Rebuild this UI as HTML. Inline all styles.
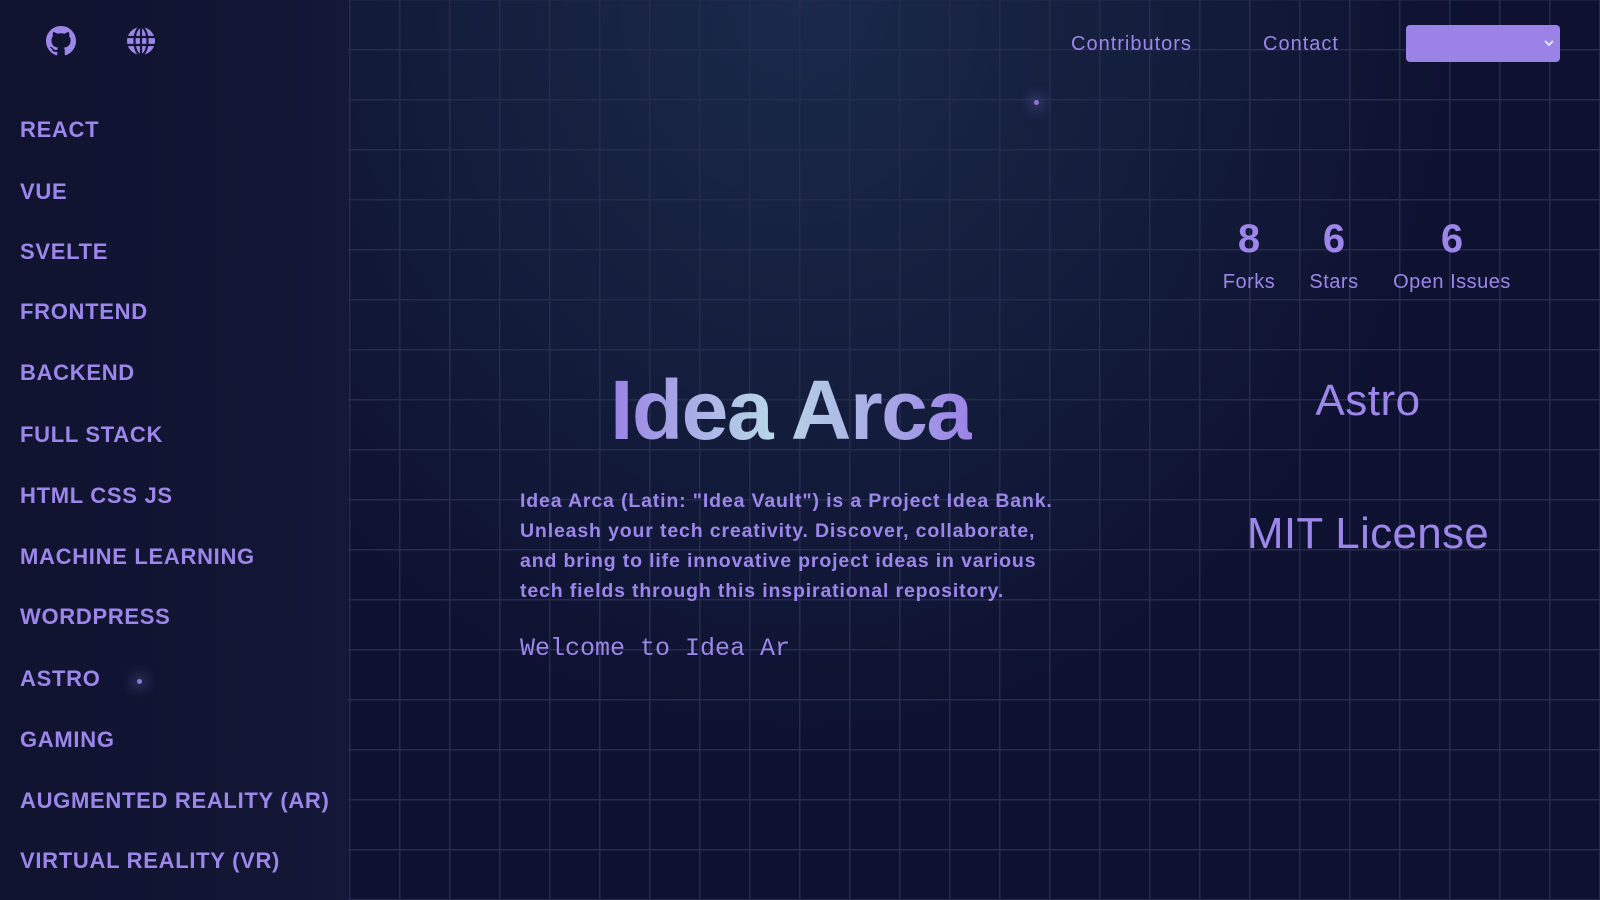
<!DOCTYPE html>
<html><head><meta charset="utf-8"><style>
*{margin:0;padding:0;box-sizing:border-box}
html,body{width:1600px;height:900px;overflow:hidden}
body{background:#0e1130;font-family:"Liberation Sans",sans-serif;color:#9d86ea;position:relative;
background-image:linear-gradient(#252a4e 1.5px,transparent 1.5px),linear-gradient(90deg,#252a4e 1.5px,transparent 1.5px),radial-gradient(ellipse at 50% 0%,#1a2a4a 0%,#0e1130 60%);
background-size:50px 50px,50px 50px,100% 100%;background-position:-1px -1px,-1px -1px,0 0}
.side{position:absolute;left:0;top:0;width:348px;height:900px;background:linear-gradient(90deg,#0f1330,#121634 80%,#14183a);}
.side .ic{position:absolute;top:26px}
.nav{position:absolute;left:20px;font-size:22px;line-height:26px;font-weight:bold;letter-spacing:0.7px;color:#9d86ea}
.top{position:absolute;top:33px;font-size:20px;letter-spacing:1px;color:#9d86ea}
.sel{position:absolute;left:1406px;top:25px;width:154px;height:37px;background:#9a82e6;border-radius:4px}
.stat{position:absolute;text-align:center;color:#9d86ea}
.stat b{display:block;font-size:40px;line-height:46px;margin-bottom:9px}
.stat span{font-size:20px;letter-spacing:0.5px}
h1{position:absolute;left:610px;top:362px;font-size:84px;font-weight:900;letter-spacing:-1.5px;
background:linear-gradient(90deg,#9a82e6 0%,#b8d8e6 45%,#9a82e6 100%);-webkit-background-clip:text;background-clip:text;color:transparent}
.desc{position:absolute;left:520px;top:486px;width:545px;font-size:19.5px;line-height:30px;font-weight:bold;letter-spacing:0.85px;color:#9d86ea}
.mono{position:absolute;left:520px;top:634px;font-family:"Liberation Mono",monospace;font-size:25px;color:#9d86ea}
.big{position:absolute;width:400px;left:1168px;text-align:center;color:#9d86ea}
.dot{position:absolute;border-radius:50%;background:#8a78d8;box-shadow:0 0 12px 6px rgba(140,120,220,.25)}
</style></head><body>
<div class="side">
<svg class="ic" style="left:46px" width="30" height="30" viewBox="0 0 16 16" fill="#9d86ea"><path d="M8 0C3.58 0 0 3.58 0 8c0 3.54 2.29 6.53 5.47 7.59.4.07.55-.17.55-.38 0-.19-.01-.82-.01-1.49-2.01.37-2.53-.49-2.69-.94-.09-.23-.48-.94-.82-1.13-.28-.15-.68-.52-.01-.53.63-.01 1.08.58 1.23.82.72 1.21 1.87.87 2.33.66.07-.52.28-.87.51-1.07-1.78-.2-3.64-.89-3.64-3.95 0-.87.31-1.59.82-2.15-.08-.2-.36-1.02.08-2.12 0 0 .67-.21 2.2.82.64-.18 1.32-.27 2-.27.68 0 1.36.09 2 .27 1.53-1.04 2.2-.82 2.2-.82.44 1.1.16 1.92.08 2.12.51.56.82 1.27.82 2.15 0 3.07-1.87 3.75-3.65 3.95.29.25.54.73.54 1.48 0 1.07-.01 1.93-.01 2.2 0 .21.15.46.55.38A8.013 8.013 0 0016 8c0-4.42-3.58-8-8-8z"/></svg>
<svg class="ic" style="left:126px" width="30" height="30" viewBox="0 0 30 30"><circle cx="15" cy="15" r="14" fill="#9d86ea"/><g stroke="#121634" stroke-width="2.2" fill="none"><line x1="1" y1="11" x2="29" y2="11"/><line x1="1" y1="19" x2="29" y2="19"/><line x1="15" y1="1" x2="15" y2="29"/><ellipse cx="15" cy="15" rx="6.5" ry="14"/></g></svg>
<div class="nav" style="top:117px">REACT</div>
<div class="nav" style="top:179px">VUE</div>
<div class="nav" style="top:239px">SVELTE</div>
<div class="nav" style="top:299px">FRONTEND</div>
<div class="nav" style="top:360px">BACKEND</div>
<div class="nav" style="top:422px">FULL STACK</div>
<div class="nav" style="top:483px">HTML CSS JS</div>
<div class="nav" style="top:544px">MACHINE LEARNING</div>
<div class="nav" style="top:604px">WORDPRESS</div>
<div class="nav" style="top:666px">ASTRO</div>
<div class="nav" style="top:727px">GAMING</div>
<div class="nav" style="top:788px">AUGMENTED REALITY (AR)</div>
<div class="nav" style="top:848px">VIRTUAL REALITY (VR)</div>
<div class="dot" style="left:137px;top:679px;width:5px;height:5px"></div>
</div>
<div class="dot" style="left:1034px;top:100px;width:5px;height:5px"></div>
<div class="top" style="left:1071px">Contributors</div>
<div class="top" style="left:1263px">Contact</div>
<div class="sel"><svg style="position:absolute;right:5px;top:13px" width="12" height="10" viewBox="0 0 12 10"><path d="M2 3l4 4 4-4" stroke="#d8e6f0" stroke-width="2" fill="none"/></svg></div>
<div class="stat" style="left:1214px;top:216px;width:70px"><b>8</b><span>Forks</span></div>
<div class="stat" style="left:1299px;top:216px;width:70px"><b>6</b><span>Stars</span></div>
<div class="stat" style="left:1382px;top:216px;width:140px"><b>6</b><span>Open Issues</span></div>
<div class="big" style="top:376px;font-size:44px;letter-spacing:0.5px">Astro</div>
<div class="big" style="top:509px;font-size:44px;letter-spacing:0.3px">MIT License</div>
<h1>Idea Arca</h1>
<div class="desc">Idea Arca (Latin: "Idea Vault") is a Project Idea Bank. Unleash your tech creativity. Discover, collaborate, and bring to life innovative project ideas in various tech fields through this inspirational repository.</div>
<div class="mono">Welcome to Idea Ar</div>
</body></html>
